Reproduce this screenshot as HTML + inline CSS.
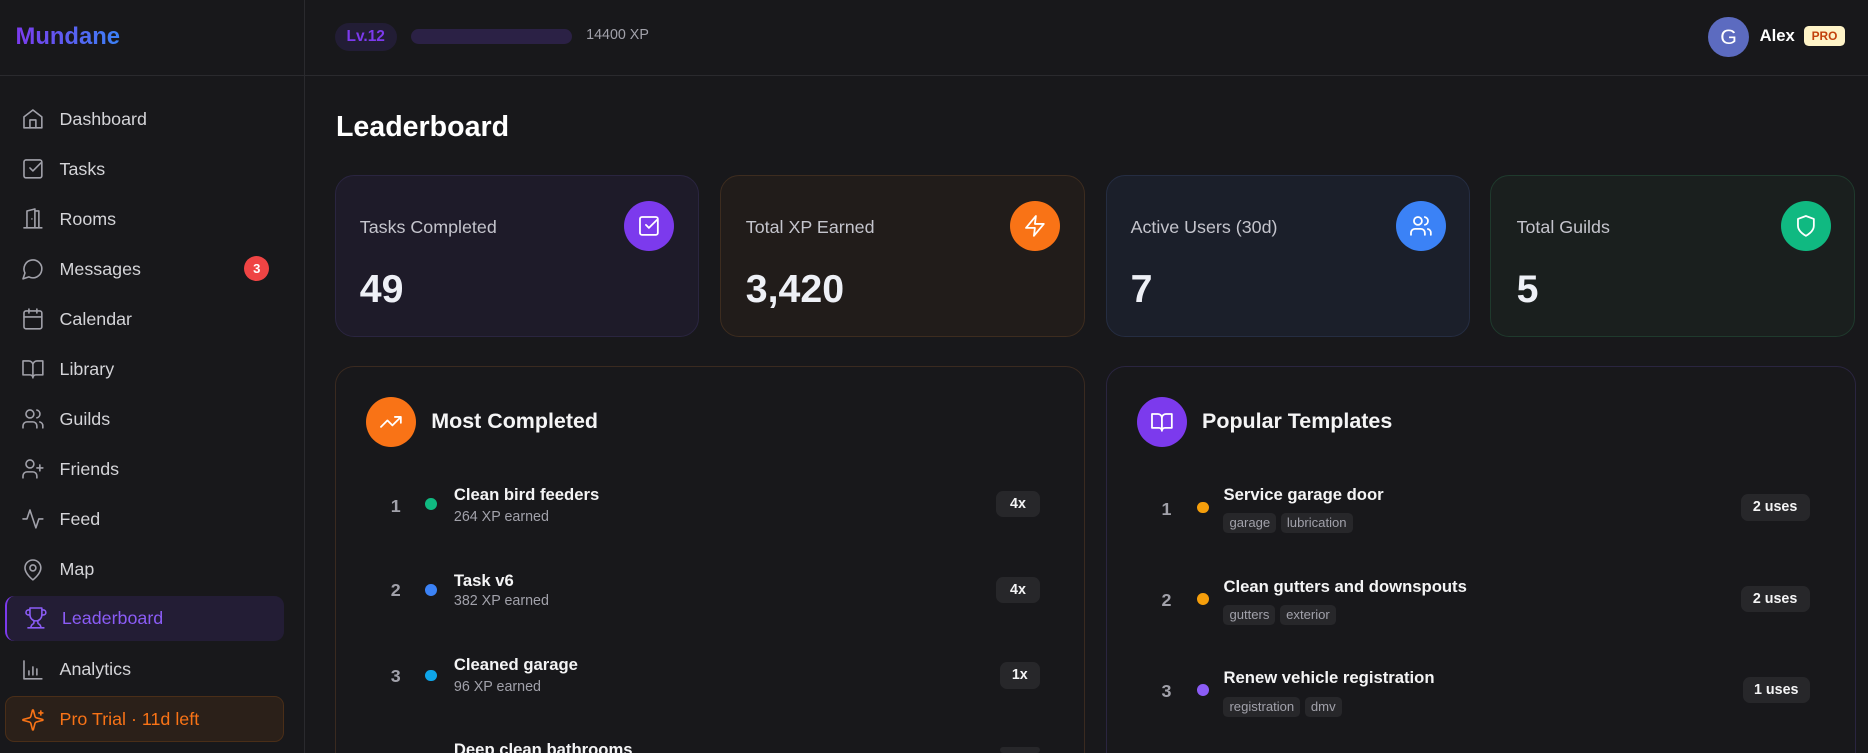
<!DOCTYPE html>
<html><head><meta charset="utf-8">
<style>
*{box-sizing:border-box;margin:0;padding:0}
html,body{width:1868px;height:753px;overflow:hidden;background:#18181b}
#w{zoom:1.19133;width:1568px;height:632px;position:relative;font-family:"Liberation Sans",sans-serif;color:#e4e4e7;overflow:hidden}
.a{position:absolute}
.side{left:0;top:0;width:256px;height:632px;border-right:1px solid #2a2a2e}
.hline{left:0;top:63px;width:1568px;height:1px;background:#2a2a2e}
.logo{left:13px;top:19px;font-size:20px;font-weight:bold;background:linear-gradient(90deg,#7c3aed,#3b82f6);-webkit-background-clip:text;color:transparent}
.nav{left:18px;height:24px;display:flex;align-items:center;font-size:15px;color:#d4d4d8}
.nav svg{width:20px;height:20px;margin-right:12px;stroke:#a1a1aa;fill:none;stroke-width:1.6;stroke-linecap:round;stroke-linejoin:round}
.card{border-radius:16px;border:1px solid}
.lab{font-size:15px;color:#c4c4cc}
.num{font-size:33px;font-weight:bold;color:#eef0f6}
.ic{width:42px;height:42px;border-radius:50%;display:flex;align-items:center;justify-content:center}
.ic svg{width:20px;height:20px;stroke:#fff;fill:none;stroke-width:1.8;stroke-linecap:round;stroke-linejoin:round}
.rk{font-size:15px;font-weight:bold;color:#a1a1aa}
.dot{width:10px;height:10px;border-radius:50%}
.tt{font-size:14px;font-weight:bold;color:#f4f4f5}
.sb{font-size:12px;color:#a1a1aa}
.bd{background:#27272a;border-radius:6px;font-size:12px;font-weight:bold;color:#f4f4f5;height:22px;line-height:22px;text-align:center}
.tag{display:inline-block;background:#27272a;border-radius:4px;font-size:11px;color:#a1a1aa;padding:0 5px;height:17px;line-height:17px;margin-right:4px}
</style></head><body><div id="w">
<div class="a side"></div>
<div class="a hline"></div>
<div class="a logo">Mundane</div>

<div class="a" style="left:281px;top:19px;width:52px;height:24px;border-radius:12px;background:#221d35;color:#7c3aed;font-size:13px;font-weight:bold;text-align:center;line-height:24px">Lv.12</div>
<div class="a" style="left:345px;top:24px;width:135px;height:13px;border-radius:7px;background:#2b2145"></div>
<div class="a" style="left:492px;top:23px;font-size:12px;color:#a1a1aa">14400 XP</div>
<div class="a" style="left:1434px;top:14px;width:34px;height:34px;border-radius:50%;background:#5c6bc0;color:#fff;text-align:center;line-height:34px;font-size:18px">G</div>
<div class="a" style="left:1477px;top:22px;font-size:14px;font-weight:bold;color:#fff">Alex</div>
<div class="a" style="left:1514px;top:22px;width:35px;height:17px;border-radius:4px;background:#fef3c7;color:#c2410c;font-size:10px;font-weight:bold;text-align:center;line-height:17px">PRO</div>

<div class="a nav" style="top:88px"><svg viewBox="0 0 24 24"><path d="M3 10l9-7 9 7v11H3z"/><path d="M9 21v-8h6v8"/></svg>Dashboard</div>
<div class="a nav" style="top:130px"><svg viewBox="0 0 24 24"><rect x="3" y="3" width="18" height="18" rx="2"/><path d="M9 11l3 3 8-8"/></svg>Tasks</div>
<div class="a nav" style="top:172px"><svg viewBox="0 0 24 24"><path d="M3 21h18M6 21V4l8-2v19M14 4h4v17"/><path d="M11 12h.01"/></svg>Rooms</div>
<div class="a nav" style="top:214px"><svg viewBox="0 0 24 24"><path d="M7.9 20A9 9 0 1 0 4 16.1L2 22z"/></svg>Messages</div>
<div class="a" style="left:205px;top:215px;width:21px;height:21px;border-radius:50%;background:#ef4444;color:#fff;font-size:11px;font-weight:bold;text-align:center;line-height:21px">3</div>
<div class="a nav" style="top:256px"><svg viewBox="0 0 24 24"><rect x="3" y="4" width="18" height="18" rx="2"/><path d="M16 2v4M8 2v4M3 10h18"/></svg>Calendar</div>
<div class="a nav" style="top:298px"><svg viewBox="0 0 24 24"><path d="M2 4h6a4 4 0 0 1 4 4v13a3 3 0 0 0-3-3H2zM22 4h-6a4 4 0 0 0-4 4v13a3 3 0 0 1 3-3h7z"/></svg>Library</div>
<div class="a nav" style="top:340px"><svg viewBox="0 0 24 24"><path d="M16 21v-2a4 4 0 0 0-4-4H6a4 4 0 0 0-4 4v2"/><circle cx="9" cy="7" r="4"/><path d="M22 21v-2a4 4 0 0 0-3-3.9M16 3.1a4 4 0 0 1 0 7.8"/></svg>Guilds</div>
<div class="a nav" style="top:382px"><svg viewBox="0 0 24 24"><path d="M16 21v-2a4 4 0 0 0-4-4H6a4 4 0 0 0-4 4v2"/><circle cx="9" cy="7" r="4"/><path d="M19 8v6M22 11h-6"/></svg>Friends</div>
<div class="a nav" style="top:424px"><svg viewBox="0 0 24 24"><path d="M22 12h-4l-3 9L9 3l-3 9H2"/></svg>Feed</div>
<div class="a nav" style="top:466px"><svg viewBox="0 0 24 24"><path d="M20 10c0 6-8 12-8 12s-8-6-8-12a8 8 0 0 1 16 0z"/><circle cx="12" cy="10" r="3"/></svg>Map</div>
<div class="a" style="left:4px;top:500px;width:234px;height:38px;border-radius:8px;background:#231d35;border-left:2px solid #7c3aed"></div>
<div class="a nav" style="top:507px;left:20px;color:#8b5cf6"><svg viewBox="0 0 24 24" style="stroke:#8b5cf6"><path d="M6 9H4.5a2.5 2.5 0 0 1 0-5H6M18 9h1.5a2.5 2.5 0 0 0 0-5H18M4 22h16M10 14.7V17c0 .6-.5 1-1 1.2C7.9 18.8 7 20.2 7 22M14 14.7V17c0 .6.5 1 1 1.2 1.1.6 2 2 2 3.8M18 2H6v7a6 6 0 0 0 12 0z"/></svg>Leaderboard</div>
<div class="a nav" style="top:550px"><svg viewBox="0 0 24 24"><path d="M3 3v18h18M8 17v-4M12 17V9M16 17v-6"/></svg>Analytics</div>
<div class="a" style="left:4px;top:584px;width:234px;height:39px;border-radius:8px;background:#2b2019;border:1px solid #4a2e18"></div>
<div class="a nav" style="top:592px;color:#f97316"><svg viewBox="0 0 24 24" style="stroke:#f97316"><path d="M9.9 15.5a2 2 0 0 0-1.4-1.4l-6.1-1.6a.5.5 0 0 1 0-1l6.1-1.6a2 2 0 0 0 1.4-1.4l1.6-6.1a.5.5 0 0 1 1 0l1.6 6.1a2 2 0 0 0 1.4 1.4l6.1 1.6a.5.5 0 0 1 0 1l-6.1 1.6a2 2 0 0 0-1.4 1.4l-1.6 6.1a.5.5 0 0 1-1 0z"/><path d="M20 3v4M22 5h-4"/></svg>Pro Trial · 11d left</div>

<div class="a" style="left:282px;top:93px;font-size:24px;font-weight:bold;color:#fff">Leaderboard</div>

<div class="a card" style="left:281px;top:147px;width:306px;height:136px;background:#1e1b29;border-color:#2a2540"></div>
<div class="a lab" style="left:302px;top:182px">Tasks Completed</div>
<div class="a ic" style="left:524px;top:169px;background:#7c3aed"><svg viewBox="0 0 24 24"><rect x="3" y="3" width="18" height="18" rx="2"/><path d="M9 11l3 3 8-8"/></svg></div>
<div class="a num" style="left:302px;top:224px">49</div>

<div class="a card" style="left:604px;top:147px;width:307px;height:136px;background:#211c1a;border-color:#3d2c1f"></div>
<div class="a lab" style="left:626px;top:182px">Total XP Earned</div>
<div class="a ic" style="left:848px;top:169px;background:#f97316"><svg viewBox="0 0 24 24"><path d="M13 2L3 14h9l-1 8 10-12h-9z"/></svg></div>
<div class="a num" style="left:626px;top:224px">3,420</div>

<div class="a card" style="left:928px;top:147px;width:306px;height:136px;background:#1b1f2a;border-color:#252d42"></div>
<div class="a lab" style="left:949px;top:182px">Active Users (30d)</div>
<div class="a ic" style="left:1172px;top:169px;background:#3b82f6"><svg viewBox="0 0 24 24"><path d="M16 21v-2a4 4 0 0 0-4-4H6a4 4 0 0 0-4 4v2"/><circle cx="9" cy="7" r="4"/><path d="M22 21v-2a4 4 0 0 0-3-3.9M16 3.1a4 4 0 0 1 0 7.8"/></svg></div>
<div class="a num" style="left:949px;top:224px">7</div>

<div class="a card" style="left:1251px;top:147px;width:306px;height:136px;background:#1a1f1e;border-color:#1f3a2d"></div>
<div class="a lab" style="left:1273px;top:182px">Total Guilds</div>
<div class="a ic" style="left:1495px;top:169px;background:#10b981"><svg viewBox="0 0 24 24"><path d="M12 22s8-4 8-10V5l-8-3-8 3v7c0 6 8 10 8 10z"/></svg></div>
<div class="a num" style="left:1273px;top:224px">5</div>

<div class="a card" style="left:281px;top:307px;width:630px;height:326px;background:#18181b;border-color:#3a2a20;border-bottom:none;border-radius:16px 16px 0 0"></div>
<div class="a ic" style="left:307px;top:333px;background:#f97316"><svg viewBox="0 0 24 24"><path d="M22 7l-8.5 8.5-5-5L2 17M16 7h6v6"/></svg></div>
<div class="a" style="left:362px;top:343px;font-size:18px;font-weight:bold;color:#f4f4f5">Most Completed</div>

<div class="a rk" style="left:328px;top:416px">1</div><div class="a dot" style="left:357px;top:418px;background:#10b981"></div>
<div class="a tt" style="left:381px;top:407px">Clean bird feeders</div><div class="a sb" style="left:381px;top:427px">264 XP earned</div>
<div class="a bd" style="left:836px;top:412px;width:37px">4x</div>

<div class="a rk" style="left:328px;top:487px">2</div><div class="a dot" style="left:357px;top:490px;background:#3b82f6"></div>
<div class="a tt" style="left:381px;top:479px">Task v6</div><div class="a sb" style="left:381px;top:498px">382 XP earned</div>
<div class="a bd" style="left:836px;top:484px;width:37px">4x</div>

<div class="a rk" style="left:328px;top:559px">3</div><div class="a dot" style="left:357px;top:562px;background:#0ea5e9"></div>
<div class="a tt" style="left:381px;top:550px">Cleaned garage</div><div class="a sb" style="left:381px;top:570px">96 XP earned</div>
<div class="a bd" style="left:839px;top:556px;width:34px">1x</div>

<div class="a tt" style="left:381px;top:621px">Deep clean bathrooms</div>
<div class="a bd" style="left:839px;top:627px;width:34px;height:5px"></div>

<div class="a card" style="left:928px;top:307px;width:630px;height:326px;background:#18181b;border-color:#2a2540;border-bottom:none;border-radius:16px 16px 0 0"></div>
<div class="a ic" style="left:954px;top:333px;background:#7c3aed"><svg viewBox="0 0 24 24"><path d="M2 4h6a4 4 0 0 1 4 4v13a3 3 0 0 0-3-3H2zM22 4h-6a4 4 0 0 0-4 4v13a3 3 0 0 1 3-3h7z"/></svg></div>
<div class="a" style="left:1009px;top:343px;font-size:18px;font-weight:bold;color:#f4f4f5">Popular Templates</div>

<div class="a rk" style="left:975px;top:419px">1</div><div class="a dot" style="left:1005px;top:421px;background:#f59e0b"></div>
<div class="a tt" style="left:1027px;top:407px">Service garage door</div>
<div class="a" style="left:1027px;top:429px"><span class="tag">garage</span><span class="tag">lubrication</span></div>
<div class="a bd" style="left:1461px;top:415px;width:58px">2 uses</div>

<div class="a rk" style="left:975px;top:495px">2</div><div class="a dot" style="left:1005px;top:498px;background:#f59e0b"></div>
<div class="a tt" style="left:1027px;top:484px">Clean gutters and downspouts</div>
<div class="a" style="left:1027px;top:506px"><span class="tag">gutters</span><span class="tag">exterior</span></div>
<div class="a bd" style="left:1461px;top:492px;width:58px">2 uses</div>

<div class="a rk" style="left:975px;top:572px">3</div><div class="a dot" style="left:1005px;top:574px;background:#8b5cf6"></div>
<div class="a tt" style="left:1027px;top:561px">Renew vehicle registration</div>
<div class="a" style="left:1027px;top:583px"><span class="tag">registration</span><span class="tag">dmv</span></div>
<div class="a bd" style="left:1463px;top:568px;width:56px">1 uses</div>
</div></body></html>
